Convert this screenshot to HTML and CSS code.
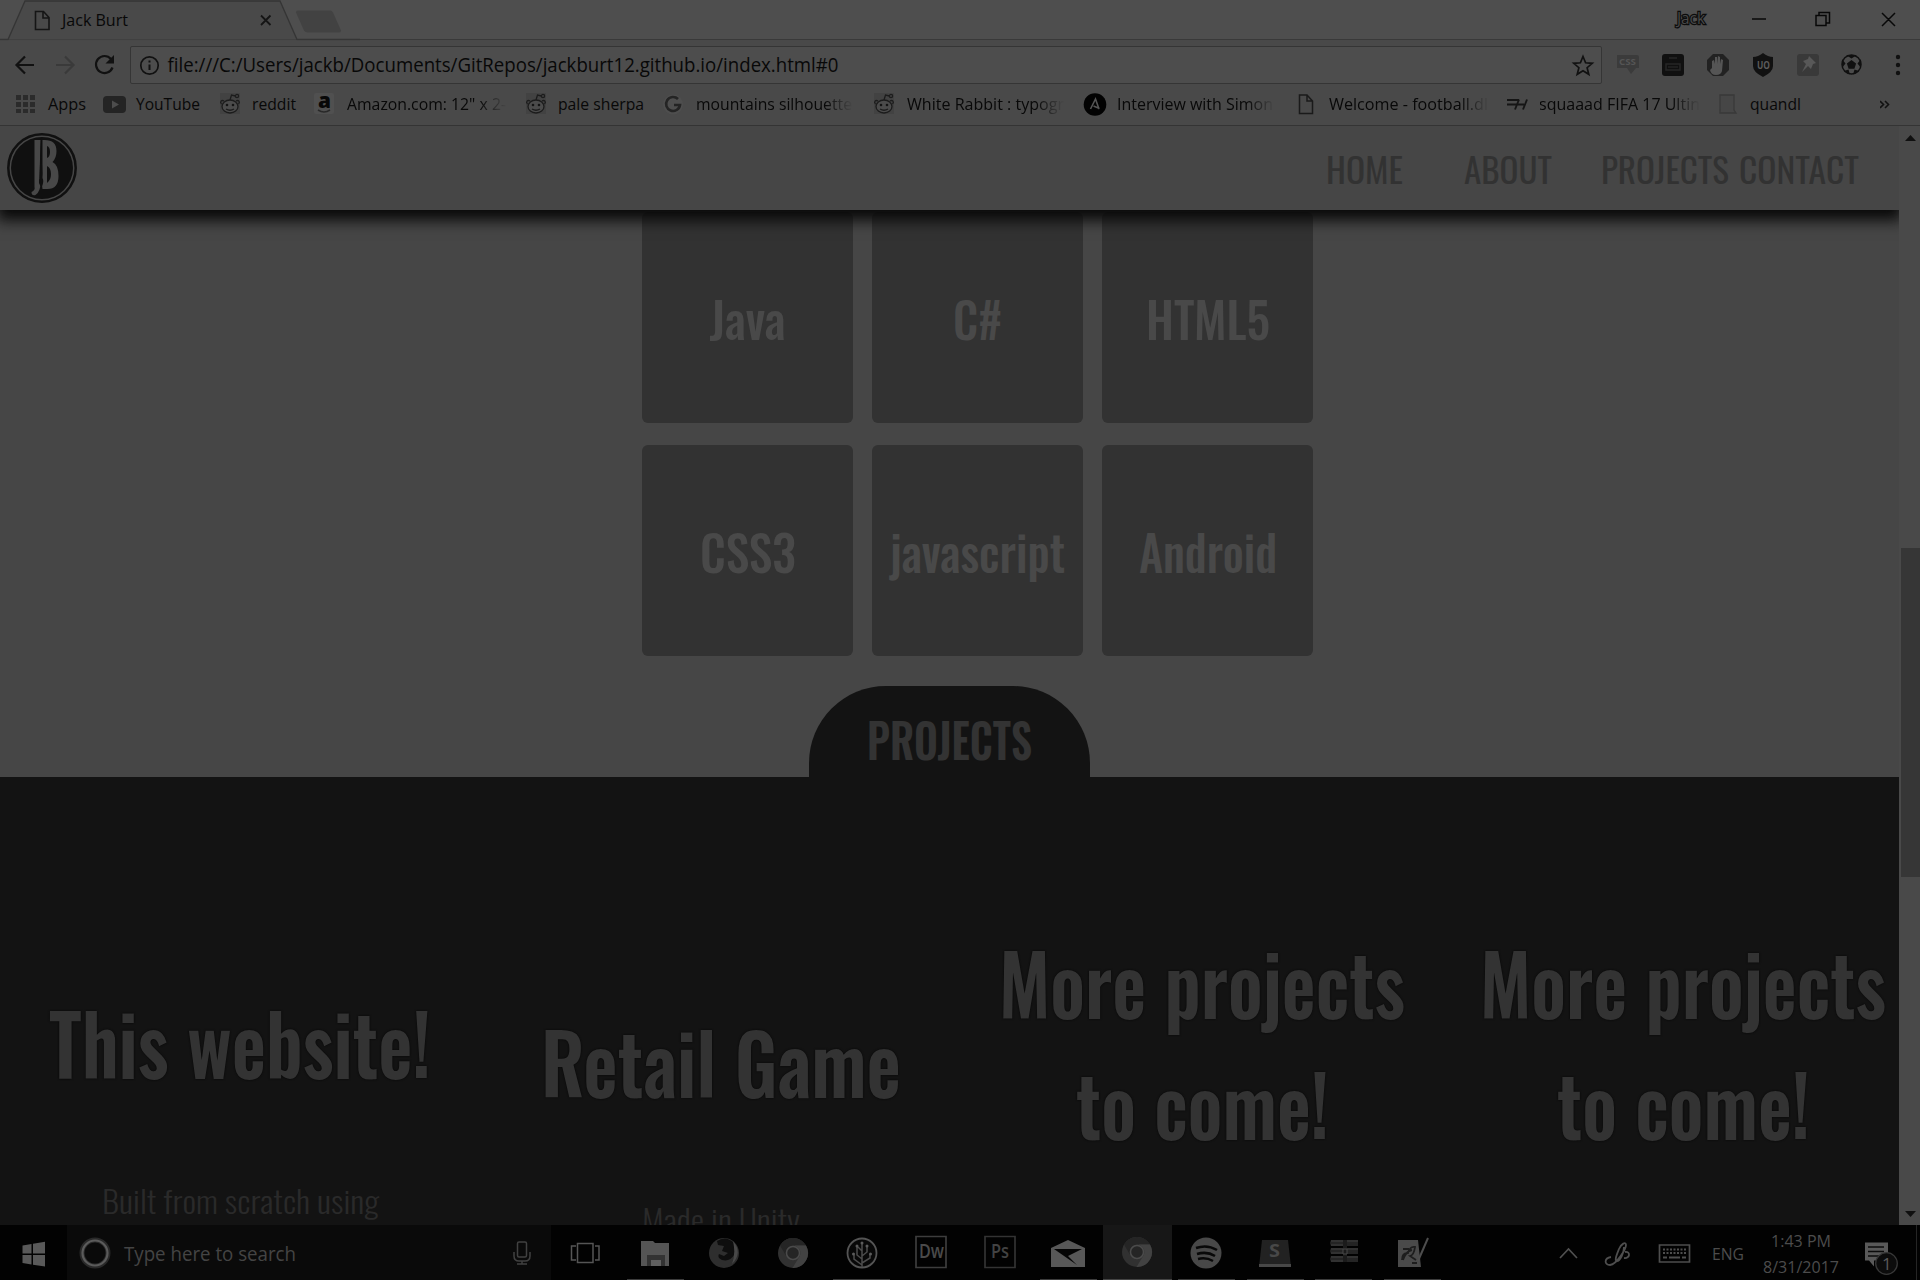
FILE: index.html
```html
<!DOCTYPE html>
<html lang="en">
<head>
<meta charset="utf-8">
<title>Jack Burt</title>
<link rel="stylesheet" href="styles.css">
</head>
<body>
<svg class="defs" width="0" height="0">
  <symbol id="reddit" viewBox="0 0 22 24"><path d="M1 1h20v21H1z" fill="#424242"/><g fill="none" stroke="#1c1c1c" stroke-width="1.300"><ellipse cx="11" cy="14.500" rx="8" ry="6.500" fill="#4b4b4b"/><path d="M11 8l1.500-5 4 1M2.500 12c-2-2 0-4.500 2.500-3M19.500 12c2-2 0-4.500-2.500-3M7 17q4 2.500 8 0"/><circle cx="18" cy="4" r="1.600"/></g><circle cx="8" cy="13" r="1.300" fill="#141414"/><circle cx="14" cy="13" r="1.300" fill="#141414"/></symbol>
  <symbol id="chrome" viewBox="0 0 32 32"><circle cx="16" cy="16" r="15" fill="#313131"/><path d="M3 8.500A15 15 0 0 1 29 8.500H16a7.500 7.500 0 0 0-6.800 10.500z" fill="#252525"/><path d="M29 8.500A15 15 0 0 1 15.500 31l7-11.500A7.500 7.500 0 0 0 16 8.500z" fill="#424242"/><circle cx="16" cy="16" r="6.500" fill="#252525" stroke="#4b4b4b" stroke-width="1.500"/></symbol>
</svg>
<div class="screen">
  <div class="tabstrip">
    <svg class="tabs" width="360" height="41"><path d="M0 39.500H8L25 1H280L297 39.500H360" fill="#494949" stroke="#353535" stroke-width="1.300"/><path d="M297 40.500H360V41H0V40.500" fill="#494949"/><path d="M298 10.500h32q2 0 3 2l8 18q0 2-2 2h-31q-3 0-4-2l-8-18q0-2 2-2z" fill="#424242"/>
      <path d="M35.500 11.500h8l5.500 6v12h-13.500zM43 11.500v6.500h6" fill="none" stroke="#151515" stroke-width="1.600"/>
      <text x="62" y="26" class="ui" font-size="16.500" textLength="66">Jack Burt</text>
      <path d="M261 15.500l9.500 9.500M270.500 15.500l-9.500 9.500" stroke="#151515" stroke-width="1.800"/></svg>
    <svg class="window-controls" width="250" height="39"><text x="7" y="23.500" class="ui user" fill="#484848" font-size="16" textLength="28">Jack</text><g fill="none" stroke="#080808" stroke-width="1.500"><path d="M82 19h14M146 15.500h10v10h-10zM149 15v-2.500h10.500v10.500h-3M212 13l13 13M225 13l-13 13"/></g></svg>
  </div>
  <div class="toolbar">
    <svg width="130" height="48"><g fill="none" stroke="#111" stroke-width="2.200"><path d="M34 25H17M25 16.500L16.500 25l8.500 8.500"/><path d="M56 25h17M65 16.500l8.500 8.500-8.500 8.500" stroke="#3a3a3a"/><path d="M111 19a8.500 8.500 0 1 0 1.500 8.500"/></g><path d="M114 15v8.500h-8.500z" fill="#111"/></svg>
    <div class="omnibox">
      <svg width="800" height="36"><circle cx="18.500" cy="18.500" r="8.700" fill="none" stroke="#111" stroke-width="1.700"/><path d="M18.500 17.500v5.500M18.500 13.500v2" stroke="#111" stroke-width="2"/><text x="36.500" y="25.400" class="ui" font-size="20" textLength="671">file:///C:/Users/jackb/Documents/GitRepos/jackburt12.github.io/index.html#0</text></svg>
      <svg width="34" height="36"><path d="M16 9.500l2.600 6.300 6.700.5-5.200 4.400 1.700 6.600-5.800-3.600-5.800 3.600 1.700-6.600-5.200-4.400 6.700-.5z" fill="none" stroke="#111" stroke-width="1.700"/></svg>
    </div>
    <svg width="318" height="48">
      <path d="M15 15h20q2 0 2 2v11h-3l-5 6-4-6H15z" fill="#3b3b3b"/><text x="17" y="25" class="ui badge" fill="#555" font-size="9" textLength="17">CSS</text>
      <rect x="60" y="14" width="22" height="22" rx="3" fill="#101010"/><path d="M67 18h8M64 24h14v6H64z" stroke="#262626" fill="none" stroke-width="1.500"/><path d="M66 27h10" stroke="#2c2c2c"/>
      <path d="M111 14h10l6 6v10l-6 6h-10l-6-6V20z" fill="#222"/><path d="M110 28v-7l2-1 1 4v-7h2v7l1-8 2 1v7l1-5 2 1-1 11q-1 4-6 4t-6-5z" fill="#555"/>
      <path d="M161 13q5 4 10 4v9q0 6-10 11-10-5-10-11v-9q5 0 10-4z" fill="#111"/><text x="155" y="29" class="ui badge" fill="#5c5c5c" font-size="11" textLength="13">UO</text>
      <rect x="195" y="14" width="22" height="22" rx="3" fill="#393939"/><path d="M207 16l7 7-3 1-2 5-3-3-6 6 4-8-3-3 5-2z" fill="#585858"/>
      <circle cx="249.500" cy="24.500" r="9.500" fill="#4b4b4b" stroke="#101010" stroke-width="1.500"/><path d="M249.500 20l4.600 3.400-1.700 5.300h-5.800l-1.700-5.300zM244 15h11l-5.500 3.500zM259 19v9l-3.500-4.500zM257 31l-6 3.500 1.500-5zM242 31l6 3.500-1.500-5zM240 19v9l3.500-4.500z" fill="#101010"/>
      <circle cx="296" cy="17" r="2.200" fill="#111"/><circle cx="296" cy="25" r="2.200" fill="#111"/><circle cx="296" cy="33" r="2.200" fill="#111"/>
    </svg>
  </div>
  <div class="bookmarks">
    <div class="bm"><svg width="22" height="24"><path d="M1 3h5v5H1zM8 3h5v5H8zM15 3h5v5h-5zM1 10h5v5H1zM8 10h5v5H8zM15 10h5v5h-5zM1 17h5v4H1zM8 17h5v4H8zM15 17h5v4h-5z" fill="#2b2b2b"/></svg><svg width="50" height="24"><text x="0" y="18" class="ui bt" textLength="38">Apps</text></svg></div>
    <div class="bm"><svg width="22" height="24"><rect x="-1" y="4" width="23" height="17" rx="4" fill="#242424"/><path d="M8 8.500l7 4-7 4z" fill="#4d4d4d"/></svg><svg width="70" height="24"><text x="-1" y="18" class="ui bt" textLength="64">YouTube</text></svg></div>
    <div class="bm"><svg width="22" height="24"><use href="#reddit"/></svg><svg width="50" height="24"><text x="0" y="18" class="ui bt" textLength="44">reddit</text></svg></div>
    <div class="bm"><svg width="22" height="24"><rect x="0" y="1" width="20" height="21" rx="2" fill="#505050"/><text x="4" y="16" font-size="21" font-weight="900" class="ui" textLength="13">a</text><path d="M4 18q6 4 12 0" fill="none" stroke="#292929" stroke-width="1.600"/></svg><svg class="fade" width="160" height="24"><text x="0" y="18" class="ui bt" textLength="159">Amazon.com: 12" x 2-</text></svg></div>
    <div class="bm"><svg width="22" height="24"><use href="#reddit" x="-1"/></svg><svg width="90" height="24"><text x="-1" y="18" class="ui bt" textLength="86">pale sherpa</text></svg></div>
    <div class="bm"><svg width="22" height="24"><circle cx="10" cy="12.500" r="10" fill="#4e4e4e"/><path d="M15 7a7 7 0 1 0 2 6h-6" fill="none" stroke="#242424" stroke-width="2.600"/></svg><svg class="fade" width="157" height="24"><text x="0" y="18" class="ui bt" textLength="156">mountains silhouette</text></svg></div>
    <div class="bm"><svg width="22" height="24"><use href="#reddit" x="-1"/></svg><svg class="fade" width="157" height="24"><text x="0" y="18" class="ui bt" textLength="157">White Rabbit : typogr</text></svg></div>
    <div class="bm"><svg width="22" height="24"><circle cx="10" cy="12.500" r="11.300" fill="#020202"/><path d="M5.500 17l5-10 3.500 10M8.500 14l6 2.500" fill="none" stroke="#555" stroke-width="1.600"/></svg><svg class="fade" width="157" height="24"><text x="-1" y="18" class="ui bt" textLength="156">Interview with Simon</text></svg></div>
    <div class="bm"><svg width="22" height="24"><path d="M3.500 3h7.500l5.500 6v12.500h-13zM11 3v6h5" fill="none" stroke="#1a1a1a" stroke-width="1.500"/></svg><svg class="fade" width="160" height="24"><text x="0" y="18" class="ui bt" textLength="159">Welcome - football.dl</text></svg></div>
    <div class="bm"><svg width="22" height="24"><path d="M0 8h12M0 12.500h11M8 17.500l4-10M11 12.500h6M16 17.500l4-10" fill="none" stroke="#151515" stroke-width="1.900"/></svg><svg class="fade" width="160" height="24"><text x="-1" y="18" class="ui bt" textLength="161">squaaad FIFA 17 Ultin</text></svg></div>
    <div class="bm"><svg width="22" height="24"><path d="M2 3h14v15l2 3H2z" fill="#464646" stroke="#393939" stroke-width="1.300"/></svg><svg width="60" height="24"><text x="-1" y="18" class="ui bt" textLength="51">quandl</text></svg></div>
    <svg width="22" height="24"><path d="M0 9l3.500 3.500L0 16M5 9l3.500 3.500L5 16" fill="none" stroke="#111" stroke-width="1.600"/></svg>
  </div>
  <div class="viewport">
    <div class="site">
      <header class="site-header">
        <svg width="76" height="80"><circle cx="38" cy="42" r="33.700" fill="none" stroke="#101010" stroke-width="2.500"/><circle cx="38" cy="42" r="31" fill="#101010"/><path d="M30.500 14h6l-1 38 1 4q0 10-5 13-4 1-4-3 4-2 3-5z" fill="#484848"/><path d="M38.500 14q14-1 14 11 0 7-4 11 6 3 6 14 0 13-11 13h-5l-1-8 1-7z" fill="#484848"/><path d="M43 20q3 1 3 6t-3 6zM43 40q4 2 4 8t-4 9z" fill="#101010"/><path d="M37 11l1.500 41q2 4-1 9-4-4-2-9z" fill="#101010"/></svg>
        <nav><svg width="572" height="84" class="sq nav-text"><text x="-1" y="57.700" textLength="77">HOME</text><text x="137" y="57.700" textLength="88">ABOUT</text><text x="274" y="57.700" textLength="128">PROJECTS</text><text x="412" y="57.700" textLength="120">CONTACT</text></svg></nav>
      </header>
      <main class="skills">
        <div class="tile"><svg width="211" height="211" class="sq tile-text"><text x="67.500" y="128" textLength="76">Java</text></svg></div>
        <div class="tile"><svg width="211" height="211" class="sq tile-text"><text x="81" y="128" textLength="49">C#</text></svg></div>
        <div class="tile"><svg width="211" height="211" class="sq tile-text"><text x="44" y="128" textLength="124">HTML5</text></svg></div>
        <div class="tile"><svg width="211" height="211" class="sq tile-text"><text x="58" y="128" textLength="96">CSS3</text></svg></div>
        <div class="tile"><svg width="211" height="211" class="sq tile-text"><text x="18" y="128" textLength="175">javascript</text></svg></div>
        <div class="tile"><svg width="211" height="211" class="sq tile-text"><text x="37" y="128" textLength="138">Android</text></svg></div>
      </main>
      <div class="section-tab"><svg width="281" height="91" class="sq tab-text"><text x="58" y="73.500" textLength="165">PROJECTS</text></svg></div>
      <section class="projects">
        <article class="project"><svg width="481" height="90" class="sq title"><text x="49" y="80" textLength="382">This website!</text></svg><svg width="481" height="40" class="sq desc"><text x="102" y="30" textLength="277">Built from scratch using</text></svg></article>
        <article class="project low"><svg width="481" height="90" class="sq title"><text x="60" y="80" textLength="360">Retail Game</text></svg><svg width="481" height="40" class="sq desc"><text x="161" y="30" textLength="158">Made in Unity</text></svg></article>
        <article class="project high"><svg width="481" height="220" class="sq title"><text x="37" y="80" textLength="406">More projects</text><text x="114" y="200.500" textLength="253">to come!</text></svg></article>
        <article class="project high"><svg width="481" height="220" class="sq title"><text x="37" y="80" textLength="406">More projects</text><text x="114" y="200.500" textLength="253">to come!</text></svg></article>
      </section>
    </div>
    <div class="scrollbar"><svg width="21" height="20"><path d="M6 15l5.500-6 5.500 6z" fill="#101010"/></svg><div class="thumb"></div><svg width="21" height="20"><path d="M6 6l5.500 6 5.500-6z" fill="#101010"/></svg></div>
  </div>
  <footer class="taskbar">
    <svg width="67" height="54"><path d="M22.500 20.500l9-1.500v9.500h-9zM33 18.700l12-2v11.800H33zM22.500 30h9v9.500l-9-1.500zM33 30h12v11.500l-12-1.800z" fill="#595959"/></svg>
    <div class="search"><svg width="484" height="54"><circle cx="28" cy="28" r="13" fill="none" stroke="#292929" stroke-width="5"/><circle cx="28" cy="28" r="12.500" fill="none" stroke="#5b5b5b" stroke-width="2.200"/><text x="57" y="36" class="ui" font-size="20" fill="#444" textLength="172">Type here to search</text><g fill="none" stroke="#414141" stroke-width="1.500"><rect x="450.500" y="17" width="9" height="15" rx="1.500"/><path d="M447 27v4q0 5 5 5h6q5 0 5-5v-4M455 36v3M450 39h10"/></g></svg></div>
    <svg width="70" height="54"><g fill="none" stroke="#555" stroke-width="1.500"><path d="M26.500 18.500h15.500v19H26.500zM25 21h-4.500v14H25M44 21h4v14h-4"/></g></svg>
    <div class="apps">
      <div class="app open"><svg width="32" height="34"><path d="M2 5h12l2 2h14v23H2z" fill="#555"/><path d="M8 19h18v11H8z" fill="#333"/><path d="M12 24h10v6H12z" fill="#606060"/></svg></div>
      <div class="app"><svg width="32" height="34"><circle cx="16" cy="17" r="15" fill="#2e2e2e"/><path d="M9 5q9-6 17 2 3 6 0 12-4 7-12 5-5-2-3-6l5 2 4-3-6-2 2-5-6-1z" fill="#0e0e0e"/><path d="M25 5q10 12-1 23 4-10 1-23z" fill="#484848"/></svg></div>
      <div class="app"><svg width="32" height="34"><use href="#chrome" width="32" height="32" y="1"/></svg></div>
      <div class="app open"><svg width="32" height="34"><circle cx="16" cy="17" r="14.500" fill="#080808" stroke="#545454" stroke-width="1.800"/><path d="M16 31V7M16 23l-5-4v-8M16 20l5-4v-5M16 29l-8-6v-4M16 27l8-5v-4M16 15l-4-4" fill="none" stroke="#4c4c4c" stroke-width="1.500"/><g fill="#5b5b5b"><circle cx="16" cy="7" r="1.500"/><circle cx="11" cy="10" r="1.500"/><circle cx="21" cy="10" r="1.500"/><circle cx="7.500" cy="18" r="1.500"/><circle cx="24.500" cy="18" r="1.500"/></g></svg></div>
      <div class="app"><svg width="32" height="38"><path d="M1 2.500h30v31H1z" fill="none" stroke="#3d3d3d" stroke-width="1.700"/><text x="4" y="24" class="ui semi" font-size="19" fill="#4a4a4a" textLength="25">Dw</text></svg></div>
      <div class="app"><svg width="32" height="38"><path d="M1 2.500h30v31H1z" fill="none" stroke="#333" stroke-width="1.700"/><text x="7" y="24" class="ui semi" font-size="19" fill="#424242" textLength="18">Ps</text></svg></div>
      <div class="app open"><svg width="36" height="34"><path d="M1 12L18 4l17 8v19H1z" fill="#585858"/><path d="M4 13h28L18 20l9 9z" fill="#050505"/></svg></div>
      <div class="app active"><svg width="32" height="34"><use href="#chrome" width="32" height="32" y="1"/></svg></div>
      <div class="app open"><svg width="32" height="34"><circle cx="16" cy="17" r="15.500" fill="#484848"/><path d="M6 12q11-4 21 2M7 18q10-3 18 2M8 23q8-2 15 2" fill="none" stroke="#080808" stroke-width="2.500"/></svg></div>
      <div class="app open"><svg width="32" height="34"><path d="M3 4h26l3 27H0z" fill="#222"/><path d="M0 28h32v3H0z" fill="#484848"/><text x="10" y="21" class="ui badge" font-size="18" fill="#484848" textLength="11">S</text></svg></div>
      <div class="app open"><svg width="32" height="34"><path d="M3 4l27 0v6H3l-1-3zM3 12h27v6H3l-1-3zM3 20h27v6H3l-1-3z" fill="#242424"/><path d="M3 5h27M3 13h27M3 21h27M3 9h14M3 17h12M3 25h14" stroke="#363636" stroke-width="1.300"/><path d="M15 4h4v22h-4z" fill="#1b1b1b"/><path d="M15 13h4v5h-4z" fill="none" stroke="#484848"/></svg></div>
      <div class="app open"><svg width="32" height="34"><path d="M1 4h20l3 27H1z" fill="#4a4a4a"/><path d="M5 24q0-7 6-7 2-7 7-6-1 8-5 9l6 4M6 24q3-9 9-10M6 13h6M15 27h5" fill="none" stroke="#1d1d1d" stroke-width="1.800"/><path d="M31 2L21 25" stroke="#4d4d4d" stroke-width="2"/></svg></div>
    </div>
    <svg class="tray" width="372" height="55">
      <path d="M12 33l8.500-9L29 33" fill="none" stroke="#505050" stroke-width="1.700"/>
      <path d="M63 32c-7 1-7 8-1 8 7-1 16-16 16-20 0-4-5-1-7 4s-5 12-2 12 7-8 7-14M77 27c6-1 5 7-1 6" fill="none" stroke="#4e4e4e" stroke-width="1.800"/>
      <path d="M111.500 20h30v17h-30z" fill="none" stroke="#4e4e4e" stroke-width="1.700"/><path d="M115 24.500h23M115 28h23" stroke="#4e4e4e" stroke-width="2" stroke-dasharray="2 1.500"/><path d="M115 32.500h4m2 0h11m2 0h4" stroke="#4e4e4e" stroke-width="2"/>
      <text x="164" y="35" class="ui" font-size="17" fill="#4c4c4c" textLength="32">ENG</text>
      <text x="223" y="22" class="ui" font-size="17" fill="#4c4c4c" textLength="60">1:43 PM</text>
      <text x="215" y="48" class="ui" font-size="17" fill="#4c4c4c" textLength="76">8/31/2017</text>
      <path d="M317 17.500h23v18h-14v6l-5-6h-4z" fill="#595959"/><path d="M320 22h16M320 26.500h16M320 31h11" stroke="#0c0c0c" stroke-width="1.500"/><circle cx="338.500" cy="38.500" r="10.800" fill="#0c0c0c" stroke="#383838" stroke-width="1.300"/><text x="334" y="44.500" class="ui" font-size="17" fill="#5a5a5a">1</text>
      <path d="M368.500 0v55" stroke="#252525"/>
    </svg>
  </footer>
</div>
<script src="text.js"></script>
</body>
</html>
```
FILE: styles.css
```css
* { box-sizing: border-box; }
body { margin: 0; background: #000; overflow: hidden; }
svg { display: block; flex: none; }
.defs { position: absolute; }
.screen { width: 1920px; height: 1280px; display: flex; flex-direction: column; overflow: hidden; }

.ui { font-family: "Open Sans", "Noto Sans", sans-serif; }
.ui:not([fill]) { fill: #080808; }
.bt { font-size: 16.5px; }
.badge { font-weight: 700; }
.semi { font-weight: 600; }
.user { stroke: #0c0c0c; stroke-width: 2.4px; paint-order: stroke; }

.tabstrip { height: 40px; flex: none; display: flex; justify-content: space-between; background: #4e4e4e; border-bottom: 1px solid #393939; }
.tabs { position: relative; }
.toolbar { height: 46px; flex: none; display: flex; background: #494949; }
.omnibox { flex: 1; height: 38px; margin-top: 6px; display: flex; justify-content: space-between; border: 1.3px solid #353535; border-radius: 2px; background: #4d4d4d; }
.bookmarks { height: 40px; flex: none; padding: 6px 0 0 15px; display: grid; grid-template-columns: 89px 115px 95px 212px 137px 211px 211px 211px 211px 211px 162px 30px; background: #494949; border-bottom: 1.3px solid #343434; }
.bm { display: flex; gap: 11px; }
.bm svg { overflow: visible; }
.fade { -webkit-mask-image: linear-gradient(90deg, #000 82%, transparent); mask-image: linear-gradient(90deg, #000 82%, transparent); }

.viewport { height: 1099px; flex: none; display: flex; }
.site { width: 1899px; height: 1099px; overflow: hidden; display: flex; flex-direction: column; background: #464646; }
.site-header { height: 84px; flex: none; display: flex; justify-content: space-between; padding-left: 4px; background: #464646; box-shadow: 0 7px 14px 3px #080808; z-index: 1; }
.sq { font-family: "Oswald", "Liberation Sans Narrow", "Roboto Condensed", Roboto, sans-serif; }
.nav-text { font-size: 34.5px; font-weight: 400; fill: #323232; }

.skills { height: 476px; flex: none; display: grid; grid-template-columns: repeat(3, 211px); gap: 22px 19px; align-content: end; padding: 0 0 30px 642px; }
.tile { height: 211px; border-radius: 6px; background: #323232; }
.tile-text { font-size: 49px; font-weight: 500; fill: #494949; }

.section-tab { width: 281px; height: 91px; flex: none; margin-left: 809px; border-radius: 77px 77px 0 0; background: #131313; }
.tab-text { font-size: 47px; font-weight: 600; fill: #333; }
.projects { width: 1924px; height: 449px; flex: none; display: grid; grid-template-columns: repeat(4, 481px); background: #131313; }
.project { display: flex; flex-direction: column; gap: 95px; padding-top: 222px; }
.project.low { padding-top: 241px; }
.project.high { padding-top: 162px; }
.title { font-size: 83px; font-weight: 600; fill: #333; overflow: visible; filter: drop-shadow(0 0 1px #050505); }
.desc { font-size: 31px; font-weight: 300; fill: #2a2a2a; overflow: visible; }

.scrollbar { width: 21px; display: flex; flex-direction: column; background: #494949; }
.thumb { height: 329px; margin: 402px 0 328px 2px; background: #363636; }

.taskbar { height: 55px; flex: none; display: flex; background: #020202; }
.search { width: 484px; background: #0a0a0a; }
.apps { width: 828px; display: flex; }
.app { width: 68.85px; height: 55px; flex: none; display: flex; align-items: center; justify-content: center; }
.app.open { background: linear-gradient(#3c3c3c, #3c3c3c) center bottom / 57px 1px no-repeat; }
.app.active { background: #171717; border-bottom: 1px solid #444; }
.tray { margin-left: 99px; }
```
FILE: text.js
```js
// Every measured label scales its glyphs together with its spacing.
document.querySelectorAll("text[textLength]").forEach(function (t) {
  t.setAttribute("lengthAdjust", "spacingAndGlyphs");
});
```
